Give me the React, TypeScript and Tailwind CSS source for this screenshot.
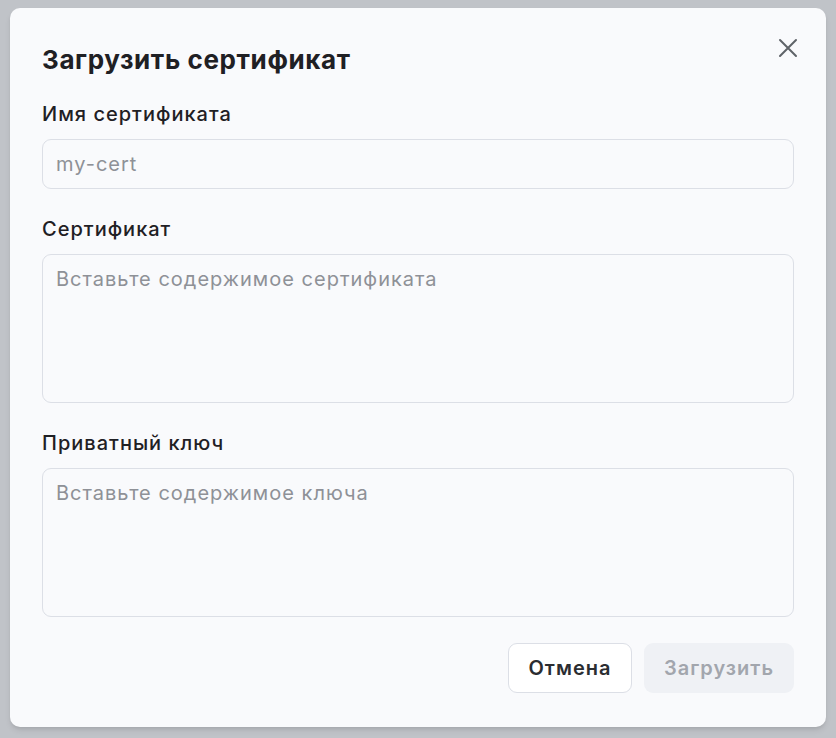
const font = { fontFamily: 'Inter, "Noto Sans", sans-serif' };

function Field({ label, placeholder, multiline }: { label: string; placeholder: string; multiline?: boolean }) {
  return (
    <div className="flex flex-col">
      <label className="text-[20px] leading-[28px] font-medium tracking-[0.05em] text-[#1f2024] mb-[11px]">{label}</label>
      {multiline ? (
        <textarea
          placeholder={placeholder}
          className="h-[149px] w-full resize-none rounded-[9px] border border-[#dcdfe6] bg-[#f9fafc] px-[13px] py-[10px] text-[20px] leading-[28px] tracking-[0.05em] text-[#1f2024] placeholder:text-[#8e9197] outline-none"
        />
      ) : (
        <input
          placeholder={placeholder}
          className="h-[50px] w-full rounded-[9px] border border-[#dcdfe6] bg-[#f9fafc] px-[13px] text-[20px] tracking-[0.05em] text-[#1f2024] placeholder:text-[#8e9197] outline-none"
        />
      )}
    </div>
  );
}

export default function App() {
  return (
    <div className="min-h-screen bg-[#c0c3c8] pt-[8px] pl-[10px]" style={font}>
      <div className="relative flex h-[719px] w-[816px] flex-col rounded-[10px] bg-[#f9fafc] px-[32px] pt-[35px] shadow-md">
        <button className="absolute right-[28px] top-[30px] text-[#5f6368]" aria-label="Закрыть">
          <svg width="20" height="20" viewBox="0 0 20 20" fill="none" stroke="currentColor" strokeWidth="2" strokeLinecap="round">
            <path d="M2 2L18 18M18 2L2 18" />
          </svg>
        </button>
        <h2 className="text-[26px] leading-[34px] font-bold tracking-[0.6px] text-[#1f2024] mb-[23px]">Загрузить сертификат</h2>

        <div className="flex flex-col gap-[26px]">
          <Field label="Имя сертификата" placeholder="my-cert" />
          <Field label="Сертификат" placeholder="Вставьте содержимое сертификата" multiline />
          <Field label="Приватный ключ" placeholder="Вставьте содержимое ключа" multiline />
        </div>

        <div className="mt-[26px] flex justify-end gap-[12px]">
          <button className="h-[50px] w-[124px] rounded-[9px] border border-[#dcdfe6] bg-white text-[20px] font-semibold tracking-[0.05em] text-[#2b2d31]">
            Отмена
          </button>
          <button disabled className="h-[50px] w-[150px] rounded-[9px] bg-[#eff1f5] text-[20px] font-semibold tracking-[0.05em] text-[#a2a6ad]">
            Загрузить
          </button>
        </div>
      </div>
    </div>
  );
}
